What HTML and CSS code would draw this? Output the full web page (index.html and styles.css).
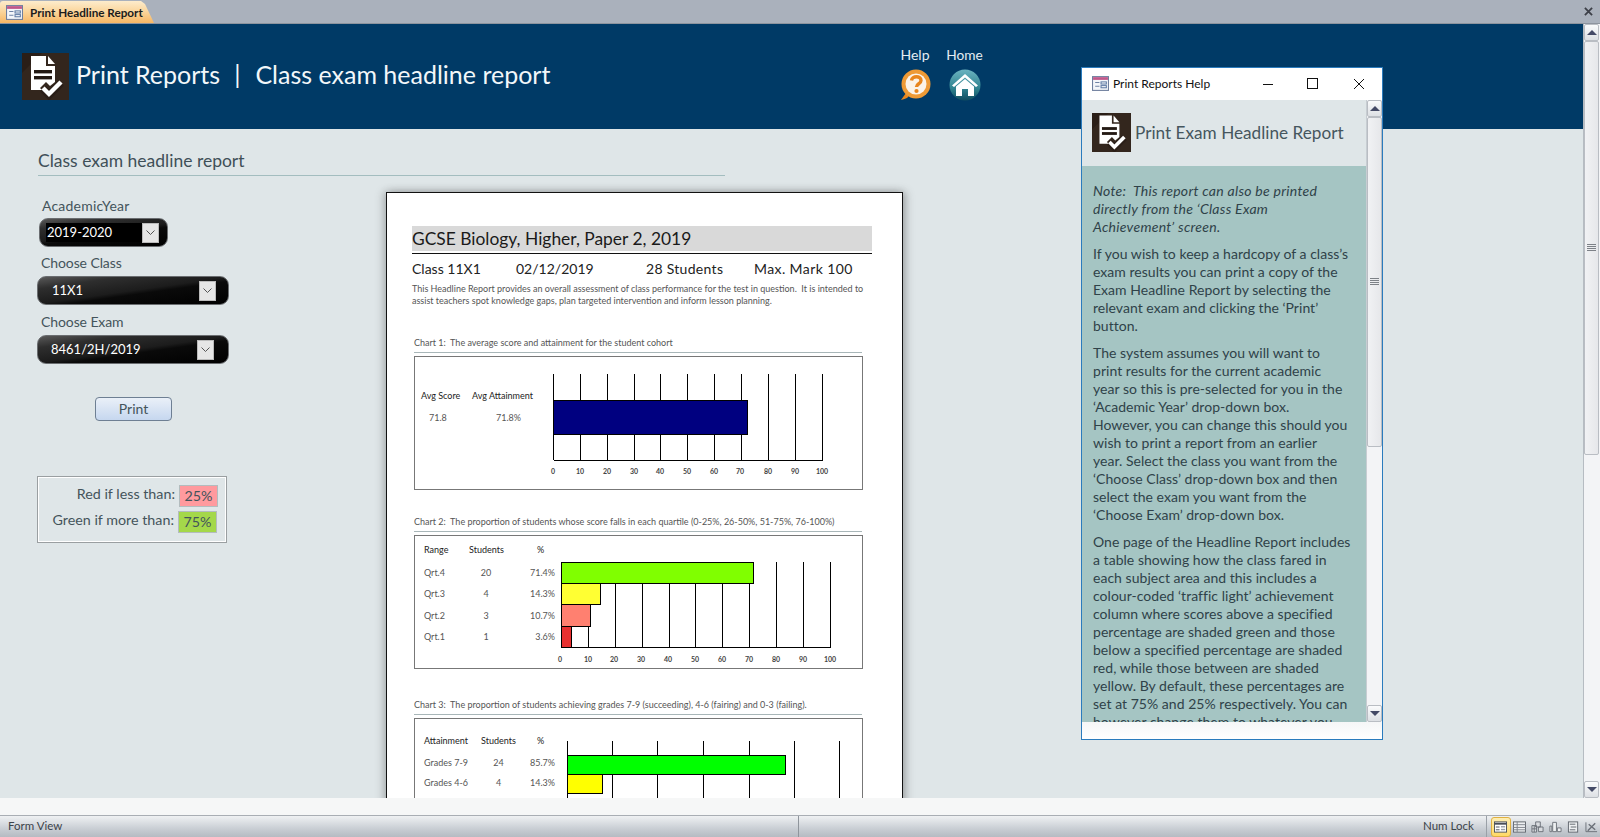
FILE: index.html
```html
<!DOCTYPE html>
<html lang="en">
<head>
<meta charset="utf-8">
<title>Print Headline Report</title>
<link rel="stylesheet" href="styles.css">
</head>
<body>
<svg class="defs" aria-hidden="true">
  <symbol id="doc" viewBox="0 0 47 47">
    <rect width="47" height="47" fill="#2a1e17"/>
    <path d="M0 47V20L20 0H47V47Z" fill="#33261d"/>
    <path d="M9 3H24V13H33V29L28 33L24 29L18 35L20 37H9Z" fill="#fff"/>
    <path d="M26 3L33 11H26Z" fill="#fff"/>
    <rect x="12" y="17" width="18" height="3.4" fill="#241a14"/>
    <rect x="12" y="23" width="18" height="3.4" fill="#241a14"/>
    <path d="M21 36L27 42L39 30" fill="none" stroke="#2a1e17" stroke-width="8"/>
    <path d="M21 35L27 41L39 29" fill="none" stroke="#fff" stroke-width="4.4"/>
  </symbol>
  <symbol id="form" viewBox="0 0 16 16">
    <rect x=".5" y="1.5" width="15" height="13" fill="#f4f6fa" stroke="#6f7f9e"/>
    <rect x="1" y="2" width="14" height="2.6" fill="#c0588a"/>
    <path d="M3 7H7M3 10.500H7" stroke="#6f83a5" fill="none"/>
    <rect x="8.500" y="6.500" width="5" height="2" fill="#fff" stroke="#5f7ba5"/>
    <rect x="8.500" y="10" width="5" height="2" fill="#fff" stroke="#5f7ba5"/>
  </symbol>
  <symbol id="chev" viewBox="0 0 9 5">
    <path d="M.5.500L4.500 4.500L8.500.500" fill="none" stroke="#555"/>
  </symbol>
</svg>

<div class="tabbar">
  <div class="tab">
    <svg class="tab-icon"><use href="#form"/></svg>
    <span>Print Headline Report</span>
  </div>
  <svg class="tab-close" viewBox="0 0 10 10"><path d="M1 1L9 9M9 1L1 9" stroke="#3d4048" stroke-width="2"/></svg>
</div>

<div class="workspace">
  <main class="form">
    <header class="band">
      <div class="brand">
        <svg class="brand-logo"><use href="#doc"/></svg>
        <h1 class="brand-title">Print Reports<span class="pipe">|</span>Class exam headline report</h1>
      </div>
      <nav class="nav">
        <div class="nav-item nav-help">
          <span>Help</span>
          <svg class="nav-icon" viewBox="0 0 32 32">
            <path d="M2 31C7 30 10 28 10 26L7 24Z" fill="#e8861e"/>
            <circle cx="17" cy="15" r="14.500" fill="#ee9a35"/>
            <circle cx="17" cy="15" r="10.500" fill="#fbf3e8"/>
            <path d="M12.500 11.500C13 6.500 22 6.500 22 11.500C22 15 17.500 14.500 17.500 18" fill="none" stroke="#e8861e" stroke-width="3.400"/>
            <circle cx="17.500" cy="22" r="2.100" fill="#e8861e"/>
          </svg>
        </div>
        <div class="nav-item nav-home">
          <span>Home</span>
          <svg class="nav-icon" viewBox="0 0 32 32">
            <defs>
              <linearGradient id="homeg" x1="0" y1="0" x2="0" y2="1">
                <stop offset="0" stop-color="#6bb3c0"/>
                <stop offset=".6" stop-color="#2f8390"/>
                <stop offset="1" stop-color="#0f4c60"/>
              </linearGradient>
            </defs>
            <circle cx="16" cy="16" r="15.500" fill="url(#homeg)"/>
            <path d="M16 5L29 16.500L27 18L16 8.500L5 18L3 16.500Z" fill="#fff"/>
            <path d="M16 10L25 17.500V27H19V20H13V27H7V17.500Z" fill="#fff"/>
          </svg>
        </div>
      </nav>
    </header>

    <h2 class="section-title">Class exam headline report</h2>

    <div class="form-body">
      <aside class="controls">
        <label class="field-label label-year">AcademicYear</label>
        <div class="combo combo-year">
          <span class="combo-field">2019-2020</span>
          <span class="combo-btn"><svg class="chev"><use href="#chev"/></svg></span>
        </div>
        <label class="field-label label-class">Choose Class</label>
        <div class="combo combo-class">
          <span class="combo-field">11X1</span>
          <span class="combo-btn"><svg class="chev"><use href="#chev"/></svg></span>
        </div>
        <label class="field-label label-exam">Choose Exam</label>
        <div class="combo combo-exam">
          <span class="combo-field">8461/2H/2019</span>
          <span class="combo-btn"><svg class="chev"><use href="#chev"/></svg></span>
        </div>
        <button class="print-btn" type="button">Print</button>
        <div class="thresholds">
          <div class="thr-row thr-red"><span>Red if less than:</span><span class="swatch swatch-red">25%</span></div>
          <div class="thr-row thr-green"><span>Green if more than:</span><span class="swatch swatch-green">75%</span></div>
        </div>
      </aside>

      <article class="page">
        <div class="rp-title">GCSE Biology, Higher, Paper 2, 2019</div>
        <div class="rp-meta">
          <span class="m1">Class 11X1</span><span class="m2">02/12/2019</span><span class="m3">28 Students</span><span class="m4">Max. Mark 100</span>
        </div>
        <p class="rp-intro">This Headline Report provides an overall assessment of class performance for the test in question.&nbsp; It is intended to<br>assist teachers spot knowledge gaps, plan targeted intervention and inform lesson planning.</p>

        <div class="caption cap1">Chart 1:&nbsp; The average score and attainment for the student cohort</div>
        <section class="chart chart1">
          <div class="stats stats1">
            <b>Avg Score</b><b>Avg Attainment</b>
            <span class="v1">71.8</span><span class="v2">71.8%</span>
          </div>
          <svg class="plot plot1" viewBox="0 0 322 132">
            <path class="grid" d="M13.500 17V103M40.500 17V103M67.500 17V103M94.500 17V103M120.500 17V103M147.500 17V103M174.500 17V103M201.500 17V103M228.500 17V103M255.500 17V103M282.500 17V103M13.500 103.500H282.500"/>
            <rect class="bar" x="13.500" y="43.500" width="194" height="34" fill="#000080"/>
            <g class="ticks">
              <text x="13" y="117">0</text><text x="40" y="117">10</text><text x="67" y="117">20</text><text x="94" y="117">30</text><text x="120" y="117">40</text><text x="147" y="117">50</text><text x="174" y="117">60</text><text x="200" y="117">70</text><text x="228" y="117">80</text><text x="255" y="117">90</text><text x="282" y="117">100</text>
            </g>
          </svg>
        </section>

        <div class="caption cap2">Chart 2:&nbsp; The proportion of students whose score falls in each quartile (0-25%, 26-50%, 51-75%, 76-100%)</div>
        <section class="chart chart2">
          <div class="stats stats2">
            <b>Range</b><b class="c">Students</b><b class="pc">%</b>
            <span>Qrt.4</span><span class="c">20</span><span class="r">71.4%</span>
            <span>Qrt.3</span><span class="c">4</span><span class="r">14.3%</span>
            <span>Qrt.2</span><span class="c">3</span><span class="r">10.7%</span>
            <span>Qrt.1</span><span class="c">1</span><span class="r">3.6%</span>
          </div>
          <svg class="plot plot2" viewBox="0 0 307 132">
            <path class="grid" d="M6.500 26V112M33.500 26V112M60.500 26V112M87.500 26V112M114.500 26V112M140.500 26V112M167.500 26V112M194.500 26V112M221.500 26V112M248.500 26V112M275.500 26V112M6.500 111.500H275.500"/>
            <rect class="bar" x="6.500" y="26.500" width="192" height="21" fill="#80ff00"/>
            <rect class="bar" x="6.500" y="47.500" width="39" height="21" fill="#ffff33"/>
            <rect class="bar" x="6.500" y="68.500" width="29" height="22" fill="#ff8070"/>
            <rect class="bar" x="6.500" y="90.500" width="10" height="21" fill="#e83030"/>
            <g class="ticks">
              <text x="5" y="126">0</text><text x="33" y="126">10</text><text x="59" y="126">20</text><text x="86" y="126">30</text><text x="113" y="126">40</text><text x="140" y="126">50</text><text x="167" y="126">60</text><text x="194" y="126">70</text><text x="221" y="126">80</text><text x="248" y="126">90</text><text x="275" y="126">100</text>
            </g>
          </svg>
        </section>

        <div class="caption cap3">Chart 3:&nbsp; The proportion of students achieving grades 7-9 (succeeding), 4-6 (fairing) and 0-3 (failing).</div>
        <section class="chart chart3">
          <div class="stats stats3">
            <b>Attainment</b><b class="c">Students</b><b class="pc">%</b>
            <span>Grades 7-9</span><span class="c">24</span><span class="r">85.7%</span>
            <span>Grades 4-6</span><span class="c">4</span><span class="r">14.3%</span>
            <span>Grades 0-3</span><span class="c">0</span><span class="r">0.0%</span>
          </div>
          <svg class="plot plot3" viewBox="0 0 307 200">
            <path class="grid" d="M12.500 22V200M57.500 22V200M102.500 22V200M148.500 22V200M194.500 22V200M239.500 22V200M284.500 22V200"/>
            <rect class="bar" x="12.500" y="36.500" width="218" height="19" fill="#00ff00"/>
            <rect class="bar" x="12.500" y="55.500" width="35" height="19" fill="#ffff00"/>
          </svg>
        </section>
      </article>
    </div>

    <section class="help-win">
      <div class="help-titlebar">
        <svg class="help-tb-icon"><use href="#form"/></svg>
        <span class="help-tb-text">Print Reports Help</span>
        <svg class="wc wc-min" viewBox="0 0 12 12"><path d="M1 6.500H11" stroke="#111"/></svg>
        <svg class="wc wc-max" viewBox="0 0 12 12"><rect x=".5" y=".5" width="10" height="10" fill="none" stroke="#111"/></svg>
        <svg class="wc wc-close" viewBox="0 0 12 12"><path d="M1 1L11 11M11 1L1 11" stroke="#111"/></svg>
      </div>
      <div class="help-body">
        <div class="help-main">
          <div class="help-head">
            <svg class="help-logo"><use href="#doc"/></svg>
            <h3 class="help-title">Print Exam Headline Report</h3>
          </div>
          <div class="help-text">
            <p><em>Note:&nbsp; This report can also be printed<br>directly from the ‘Class Exam<br>Achievement’ screen.</em></p>
            <p>If you wish to keep a hardcopy of a class’s<br>exam results you can print a copy of the<br>Exam Headline Report by selecting the<br>relevant exam and clicking the ‘Print’<br>button.</p>
            <p>The system assumes you will want to<br>print results for the current academic<br>year so this is pre-selected for you in the<br>‘Academic Year’ drop-down box.<br>However, you can change this should you<br>wish to print a report from an earlier<br>year. Select the class you want from the<br>‘Choose Class’ drop-down box and then<br>select the exam you want from the<br>‘Choose Exam’ drop-down box.</p>
            <p>One page of the Headline Report includes<br>a table showing how the class fared in<br>each subject area and this includes a<br>colour-coded ‘traffic light’ achievement<br>column where scores above a specified<br>percentage are shaded green and those<br>below a specified percentage are shaded<br>red, while those between are shaded<br>yellow. By default, these percentages are<br>set at 75% and 25% respectively. You can<br>however change them to whatever you</p>
          </div>
        </div>
        <div class="sb sb-help">
          <span class="sb-btn"><i class="tri tri-up"></i></span>
          <span class="sb-thumb thumb-help"><i class="grip"></i></span>
          <span class="sb-track"></span>
          <span class="sb-btn"><i class="tri tri-down"></i></span>
        </div>
      </div>
      <div class="help-foot"></div>
    </section>
  </main>

  <div class="sb sb-main">
    <span class="sb-btn"><i class="tri tri-up"></i></span>
    <span class="sb-thumb thumb-main"><i class="grip"></i></span>
    <span class="sb-track"></span>
    <span class="sb-btn"><i class="tri tri-down"></i></span>
  </div>
</div>

<div class="strip"></div>
<footer class="status">
  <span class="st-left">Form View</span>
  <span class="st-right">Num Lock</span>
  <div class="views">
    <span class="view view-on"><svg class="v-ico" viewBox="0 0 14 12"><rect x=".5" y=".5" width="13" height="11" fill="#fff" stroke="#4a4f58"/><path d="M.5 2.500H13.500" stroke="#4a4f58" stroke-width="2"/><path d="M2 6H6M2 9H6" stroke="#4a4f58"/><rect x="7.500" y="5" width="4.500" height="1.500" fill="#9aa0a8"/><rect x="7.500" y="8" width="4.500" height="1.500" fill="#9aa0a8"/></svg></span>
    <span class="view"><svg class="v-ico" viewBox="0 0 14 12"><rect x=".5" y=".5" width="13" height="11" fill="#eef0f2" stroke="#5e636b"/><path d="M.5 3.500H13.500M.5 6.500H13.500M.5 9H13.500M4.500 .5V11.500" stroke="#7d828a" fill="none"/></svg></span>
    <span class="view"><svg class="v-ico" viewBox="0 0 14 12"><path d="M1 4.500H6V11.500H1ZM5 .5H10V6H5ZM8 6H13V11H8Z" fill="#d8dbdf" stroke="#6a6f77"/><path d="M1 8H6M3.500 4.500V11.500" stroke="#6a6f77"/></svg></span>
    <span class="view"><svg class="v-ico" viewBox="0 0 14 12"><path d="M1 5H3V11H1ZM4 1H8V11H4ZM9 7H13V11H9Z" fill="#eef0f2" stroke="#6a6f77"/></svg></span>
    <span class="view"><svg class="v-ico" viewBox="0 0 14 12"><rect x="1.500" y=".5" width="10" height="11" fill="#eef0f2" stroke="#5e636b"/><path d="M3 3H9M4 6H10M3 9H9" stroke="#5e636b"/></svg></span>
    <span class="view"><svg class="v-ico" viewBox="0 0 14 12"><path d="M1 1V11H13" fill="none" stroke="#6a6f77"/><path d="M3 10L11 2M4 3L11 9" stroke="#6a6f77" stroke-width="1.500"/></svg></span>
  </div>
</footer>
</body>
</html>
```

FILE: styles.css
```css
* { box-sizing: border-box; }
html, body { margin: 0; padding: 0; }
body {
  width: 1600px;
  height: 837px;
  display: flex;
  flex-direction: column;
  overflow: hidden;
  font-family: "Lato", "Open Sans", sans-serif;
  color: #3d4a50;
  background: #dfe6e8;
}
.defs { position: absolute; width: 0; height: 0; }

/* tab bar */
.tabbar {
  height: 24px;
  flex: none;
  display: flex;
  align-items: stretch;
  justify-content: space-between;
  background: #aab1bc;
  border-bottom: 1px solid #8d949e;
}
.tab {
  width: 154px;
  display: flex;
  align-items: center;
  padding-left: 6px;
  gap: 7px;
  margin-top: 1px;
  background: linear-gradient(#fdeccc, #fbd79f 45%, #f7b764);
  clip-path: polygon(0 0, 141px 0, 145px 3px, 154px 100%, 0 100%);
  border-radius: 3px 0 0 0;
  font-size: 11.7px;
  font-weight: 700;
  line-height: 20px;
  color: #1c1c1c;
}
.tab-icon { width: 17px; height: 17px; }
.tab-close { width: 9px; height: 9px; margin: 7px 7px 0 0; }

/* workspace */
.workspace { flex: 1; display: flex; min-height: 0; }
.form {
  width: 1583px;
  position: relative;
  overflow: hidden;
  background: #dfe6e8;
}
.band {
  height: 105px;
  background: #003a66;
  display: flex;
  align-items: flex-start;
  padding-left: 22px;
}
.brand { width: 877px; display: flex; align-items: center; margin-top: 29px; gap: 7px; }
.brand-logo { width: 47px; height: 47px; flex: none; }
.brand-title {
  margin: 0;
  padding-bottom: 6px;
  font-size: 25px;
  font-weight: 400;
  color: #f2f7fa;
  white-space: nowrap;
}
.pipe { margin: 0 15px 0 14px; }
.nav { display: flex; gap: 15px; margin-top: 22px; color: #e4edf3; font-size: 14px; }
.nav-item { display: flex; flex-direction: column; align-items: center; line-height: 18px; gap: 5px; }
.nav-help { width: 32px; }
.nav-home { width: 37px; font-size: 13.7px; }
.nav-icon { width: 32px; height: 32px; }

/* section */
.section-title {
  margin: 19px 0 16px 38px;
  width: 687px;
  height: 28px;
  font-size: 17.5px;
  font-weight: 400;
  line-height: 25px;
  color: #3f5058;
  border-bottom: 1px solid #a3bdbf;
}
.form-body { display: flex; align-items: flex-start; }
.controls {
  width: 386px;
  flex: none;
  display: flex;
  flex-direction: column;
  align-items: flex-start;
}
.field-label { font-size: 14px; line-height: 18px; color: #44545b; letter-spacing: -.1px; }
.label-year { margin: 5px 0 3px 42px; letter-spacing: .2px; }
.label-class { margin: 7px 0 4px 41px; }
.label-exam { margin: 8px 0 4px 41px; }

.combo {
  display: flex;
  align-items: center;
  height: 29px;
  border-radius: 9px;
  background: linear-gradient(172deg, #5a5a5a 0, #2e2e2e 22%, #1c1c1c 50%, #0a0a0a 58%, #000 100%);
  border: 1px solid #6a6d70;
  color: #fff;
  font-size: 13px;
}
.combo-field { flex: 1; white-space: nowrap; line-height: 18px; padding-bottom: 1px; }
.combo-btn {
  width: 17px;
  height: 20px;
  flex: none;
  background: #e6e6e6;
  border: 1px solid #bbb;
  display: flex;
  align-items: center;
  justify-content: center;
}
.chev { width: 9px; height: 5px; }
.combo-year { width: 129px; margin-left: 39px; padding: 0 8px 0 6px; }
.combo-year .combo-field { background: #000; height: 19px; line-height: 18px; padding-left: 1px; }
.combo-class { width: 192px; margin-left: 37px; padding: 0 12px 0 14px; }
.combo-exam { width: 192px; margin-left: 37px; padding: 0 14px 0 13px; }

.print-btn {
  margin: 33px 0 0 95px;
  width: 77px;
  height: 24px;
  padding: 0 0 2px;
  border: 1px solid #6e7f93;
  border-radius: 4px;
  background: linear-gradient(#eaf0f8, #c6d7ef);
  font: 14px "Lato", sans-serif;
  color: #44545b;
}
.thresholds {
  margin: 55px 0 0 37px;
  width: 190px;
  height: 67px;
  border: 1px solid #9a9fa1;
  outline: 1px solid #fff;
  outline-offset: -2px;
  display: flex;
  flex-direction: column;
  font-size: 14.3px;
  color: #44545b;
  padding-top: 8px;
  gap: 4px;
}
.thr-row { display: flex; justify-content: flex-end; align-items: flex-start; height: 22px; gap: 4px; line-height: 18px; }
.thr-red { padding-right: 8px; }
.thr-green { padding-right: 9px; }
.swatch { width: 39px; height: 22px; text-align: center; line-height: 19px; border: 1px solid #b3bcbe; }
.swatch-red { background: #ff9a9e; }
.swatch-green { background: #a4d84a; }

/* report page */
.page {
  width: 517px;
  height: 760px;
  flex: none;
  background: #fff;
  border: 1px solid #111;
  box-shadow: 3px 0 8px rgba(60, 60, 60, .35), -3px 0 8px rgba(60, 60, 60, .25);
  padding: 33px 0 0 25px;
  color: #333;
}
.rp-title {
  width: 460px;
  height: 28px;
  padding-bottom: 3px;
  background: linear-gradient(#d9d9d9, #d9d9d9 25px, #fff 25px, #fff 27px, #111 27px);
  font-size: 17.4px;
  line-height: 25px;
  color: #1a1a1a;
}
.rp-meta {
  display: flex;
  height: 20px;
  margin-top: 5px;
  font-size: 14px;
  line-height: 20px;
  color: #222;
}
.m1 { width: 104px; }
.m2 { width: 130px; }
.m3 { width: 108px; letter-spacing: .3px; }
.m4 { letter-spacing: .4px; }
.rp-intro {
  margin: 4px 0 0;
  font-size: 9px;
  line-height: 12px;
  color: #555;
  white-space: nowrap;
}
.caption {
  width: 448px;
  height: 16px;
  margin-left: 2px;
  border-bottom: 1px solid #a8b6b8;
  font-size: 9px;
  line-height: 12px;
  color: #555;
  white-space: nowrap;
}
.cap1 { margin-top: 30px; }
.cap2 { margin-top: 26px; }
.cap3 { margin-top: 30px; }
.chart {
  width: 449px;
  margin-left: 2px;
  border: 1px solid #777;
  display: flex;
  align-items: flex-start;
  font-size: 9px;
  color: #555;
  overflow: hidden;
}
.chart1 { margin-top: 3px; height: 134px; }
.chart2 { margin-top: 3px; height: 134px; }
.chart3 { margin-top: 3px; height: 200px; }
.stats { display: grid; flex: none; white-space: nowrap; }
.stats b { font-weight: 400; color: #222; }
.stats .c { text-align: center; }
.stats .r { text-align: right; }
.stats .pc { padding-left: 34px; }
.stats1 {
  width: 125px;
  padding: 32px 0 0 6px;
  grid-template-columns: 51px 62px;
  grid-auto-rows: 22px;
  line-height: 14px;
}
.v1 { padding-left: 8px; }
.v2 { padding-left: 24px; }
.stats2 {
  width: 140px;
  padding: 3px 0 0 9px;
  grid-template-columns: 45px 34px 52px;
  grid-template-rows: 22.700px repeat(4, 21.500px);
  line-height: 22px;
}
.stats3 {
  width: 140px;
  padding: 12px 0 0 9px;
  grid-template-columns: 57px 35px 39px;
  grid-template-rows: 22px repeat(3, 19.500px);
  line-height: 20px;
}
.stats3 .pc { padding-left: 21px; }
.plot { flex: none; display: block; }
.plot1 { width: 322px; height: 132px; }
.plot2 { width: 307px; height: 132px; }
.plot3 { width: 307px; height: 200px; }
.grid { stroke: #000; stroke-width: 1; fill: none; shape-rendering: crispEdges; }
.bar { stroke: #000; stroke-width: 1; shape-rendering: crispEdges; }
.ticks text { font-size: 7px; font-weight: 700; fill: #444; text-anchor: middle; }

/* floating help window */
.help-win {
  position: absolute;
  left: 1081px;
  top: 43px;
  width: 302px;
  height: 673px;
  display: flex;
  flex-direction: column;
  background: #fff;
  border: 1px solid #2a7bbd;
}
.help-titlebar {
  height: 32px;
  flex: none;
  display: flex;
  align-items: center;
  padding: 0 0 1px 10px;
  font-size: 12px;
  color: #111;
}
.help-tb-icon { width: 17px; height: 17px; flex: none; }
.help-tb-text { width: 148.500px; margin-left: 4px; white-space: nowrap; }
.wc { width: 12px; height: 12px; flex: none; }
.wc-max { margin-left: 33px; }
.wc-close { margin-left: 34px; }
.help-body { height: 622px; flex: none; display: flex; padding-right: 1px; }
.help-main {
  width: 284px;
  flex: none;
  display: flex;
  flex-direction: column;
  overflow: hidden;
  background: #dfe6e8;
}
.help-head { height: 66px; flex: none; display: flex; align-items: flex-start; padding: 13px 0 0 10px; gap: 4px; }
.help-logo { width: 39px; height: 39px; flex: none; }
.help-title {
  margin: 0;
  font-size: 17.2px;
  font-weight: 400;
  line-height: 39px;
  color: #46565e;
  white-space: nowrap;
}
.help-text {
  flex: 1;
  overflow: hidden;
  background: #a5c5c3;
  padding: 16px 0 0 11px;
  font-size: 14px;
  letter-spacing: .03px;
  line-height: 18px;
  color: #2f4249;
  white-space: nowrap;
}
.help-text p { margin: 0 0 9px; }
.help-text em { letter-spacing: .28px; }
.help-foot { flex: 1; background: linear-gradient(#f5f6f7, #fff); }

/* scrollbars */
.sb { display: flex; flex-direction: column; flex: none; background: #f3f4f6; }
.sb-main { width: 17px; height: 774px; border-left: 1px solid #b6bcc2; padding-right: 1px; }
.sb-help { width: 16px; height: 622px; border-left: 1px solid #c7cdd2; }
.sb-btn {
  height: 17px;
  flex: none;
  background: linear-gradient(#fafbfc, #dde0e4);
  border: 1px solid #b9bdc3;
  border-radius: 2px;
  display: flex;
  align-items: center;
  justify-content: center;
}
.sb-thumb {
  flex: none;
  background: linear-gradient(90deg, #f1f2f4, #e6e7ea);
  border: 1px solid #b9bdc3;
  border-radius: 2px;
  display: flex;
  align-items: center;
  justify-content: center;
}
.thumb-main { height: 414px; }
.thumb-help { height: 330px; }
.sb-track { flex: 1; }
.tri { display: block; width: 0; height: 0; border-left: 5px solid transparent; border-right: 5px solid transparent; }
.tri-up { border-bottom: 5px solid #444a66; }
.tri-down { border-top: 5px solid #444a66; }
.grip {
  display: block;
  width: 9px;
  height: 8px;
  background: repeating-linear-gradient(#7d8187 0 1px, transparent 1px 2px);
}

/* bottom */
.strip { flex: none; background: #f6f7f7; border-bottom: 1px solid #a9aeb4; height: 18px; }
.status {
  height: 21px;
  flex: none;
  display: flex;
  align-items: center;
  background: linear-gradient(#eff1f3, #c9ced4 60%, #b5bbc2);
  font-size: 11.500px;
  color: #3c434a;
}
.st-left { width: 799px; height: 21px; padding-left: 8px; border-right: 1px solid #8f959c; line-height: 19px; }
.st-right { margin-left: auto; width: 64px; height: 21px; line-height: 19px; border-right: 1px solid #9aa0a7; }
.views { display: flex; width: 113px; padding-left: 4px; }
.view { width: 18px; height: 20px; display: flex; align-items: center; justify-content: center; }
.view-on { width: 20px; background: linear-gradient(#fdeeb4, #ffd966); border: 1px solid #e0b040; border-radius: 3px; }
.v-ico { width: 13px; height: 12px; }
```
